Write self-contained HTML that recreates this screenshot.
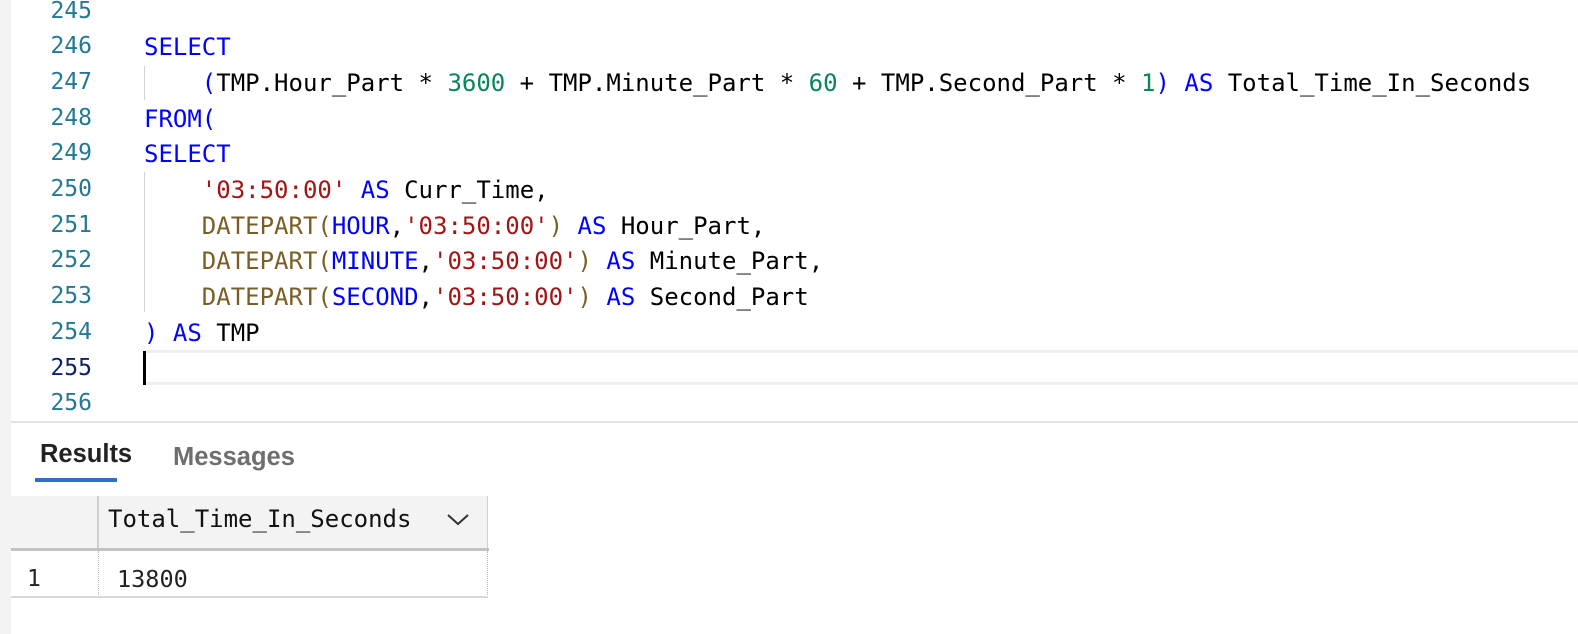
<!DOCTYPE html>
<html><head><style>
body{margin:0;width:1578px;height:634px;background:#fff;position:relative;overflow:hidden;font-family:"DejaVu Sans Mono","Liberation Mono",monospace;}
.strip{position:absolute;left:0;top:0;width:11px;height:634px;background:#f3f3f3}
.ln{position:absolute;left:0;width:92px;text-align:right;font-size:23px;color:#237893;line-height:36px}
.code{position:absolute;left:144px;font-size:24px;line-height:36px;color:#000;white-space:pre;margin-top:2px}
.k{color:#0000ff}.s{color:#a31515}.n{color:#098658}.f{color:#795e26}
.guide{position:absolute;left:144px;width:1px;background:#d3d3d3}
</style></head><body>
<div class="strip"></div>
<div style="position:absolute;left:144px;top:350px;width:1434px;height:35px;border-top:3px solid #eeeeee;border-bottom:3px solid #eeeeee;box-sizing:border-box"></div>
<div style="position:absolute;left:143px;top:351px;width:3px;height:34px;background:#000"></div>
<div class="guide" style="top:66px;height:34px"></div>
<div class="guide" style="top:172px;height:140px"></div>
<div class="ln" style="top:-7px">245</div>
<div class="ln" style="top:28px">246</div>
<div class="ln" style="top:64px">247</div>
<div class="ln" style="top:100px">248</div>
<div class="ln" style="top:135px">249</div>
<div class="ln" style="top:171px">250</div>
<div class="ln" style="top:207px">251</div>
<div class="ln" style="top:242px">252</div>
<div class="ln" style="top:278px">253</div>
<div class="ln" style="top:314px">254</div>
<div class="ln" style="top:350px;color:#0b216f">255</div>
<div class="ln" style="top:385px">256</div>
<div class="code" style="top:27px"><span class="k">SELECT</span></div>
<div class="code" style="top:63px">    <span class="k">(</span>TMP.Hour_Part * <span class="n">3600</span> + TMP.Minute_Part * <span class="n">60</span> + TMP.Second_Part * <span class="n">1</span><span class="k">)</span> <span class="k">AS</span> Total_Time_In_Seconds</div>
<div class="code" style="top:99px"><span class="k">FROM(</span></div>
<div class="code" style="top:134px"><span class="k">SELECT</span></div>
<div class="code" style="top:170px">    <span class="s">'03:50:00'</span> <span class="k">AS</span> Curr_Time,</div>
<div class="code" style="top:206px">    <span class="f">DATEPART</span><span class="f">(</span><span class="k">HOUR</span>,<span class="s">'03:50:00'</span><span class="f">)</span> <span class="k">AS</span> Hour_Part,</div>
<div class="code" style="top:241px">    <span class="f">DATEPART(</span><span class="k">MINUTE</span>,<span class="s">'03:50:00'</span><span class="f">)</span> <span class="k">AS</span> Minute_Part,</div>
<div class="code" style="top:277px">    <span class="f">DATEPART(</span><span class="k">SECOND</span>,<span class="s">'03:50:00'</span><span class="f">)</span> <span class="k">AS</span> Second_Part</div>
<div class="code" style="top:313px"><span class="k">)</span> <span class="k">AS</span> TMP</div>
<div style="position:absolute;left:11px;top:421px;width:1567px;height:2px;background:#e2e2e2"></div>
<div style="position:absolute;left:40px;top:440px;font-family:'Liberation Sans',sans-serif;font-weight:bold;font-size:25.5px;color:#222">Results</div>
<div style="position:absolute;left:173px;top:443px;font-family:'Liberation Sans',sans-serif;font-weight:bold;font-size:25.5px;color:#6e6e6e">Messages</div>
<div style="position:absolute;left:35px;top:478px;width:82px;height:4px;background:#2f6fc5"></div>
<div style="position:absolute;left:11px;top:496px;width:477px;height:52px;background:#f3f3f4;border-right:1px solid #d0d0d0;box-sizing:border-box"></div>
<div style="position:absolute;left:97px;top:496px;width:2px;height:52px;background:#d0d0d0"></div>
<div style="position:absolute;left:11px;top:548px;width:478px;height:3px;background:#c2c2c2"></div>
<div style="position:absolute;left:108px;top:501px;font-size:24px;line-height:36px;color:#111">Total_Time_In_Seconds</div>
<svg style="position:absolute;left:445px;top:509px" width="26" height="20"><path d="M3 6 L13 15 L23 6" fill="none" stroke="#333" stroke-width="2"/></svg>
<div style="position:absolute;left:98px;top:551px;height:46px;border-left:1px dotted #bbb"></div>
<div style="position:absolute;left:487px;top:551px;height:46px;border-left:1px dotted #bbb"></div>
<div style="position:absolute;left:11px;top:596px;width:477px;height:2px;background:#d8d8d8"></div>
<div style="position:absolute;left:27px;top:561px;font-size:23px;line-height:36px;color:#222">1</div>
<div style="position:absolute;left:117px;top:561px;font-size:23.5px;line-height:36px;color:#222">13800</div>
</body></html>
